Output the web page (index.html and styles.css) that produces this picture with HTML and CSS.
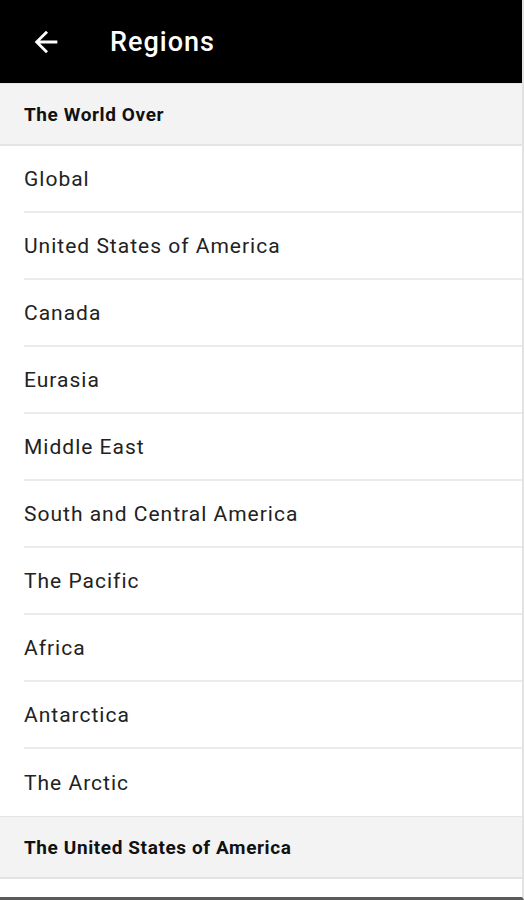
FILE: index.html
```
<!DOCTYPE html>
<html lang="en">
<head>
    <meta charset="UTF-8">
    <meta name="viewport" content="width=device-width, initial-scale=1.0">
    <title>Regions</title>
    <link rel="stylesheet" href="styles.css">
</head>
<body>

    <div class="screen">
        <header class="toolbar">
            <span class="back">
                <svg width="34" height="34" viewBox="0 0 24 24"><path d="M20 11H7.83l5.59-5.59L12 4l-8 8 8 8 1.41-1.41L7.83 13H20v-2z" fill="#fff"/></svg>
            </span>
            <h1>Regions</h1>
        </header>

        <div class="section">The World Over</div>
        <ul class="list">
            <li>Global</li>
            <li>United States of America</li>
            <li>Canada</li>
            <li>Eurasia</li>
            <li>Middle East</li>
            <li>South and Central America</li>
            <li>The Pacific</li>
            <li>Africa</li>
            <li>Antarctica</li>
            <li class="last">The Arctic</li>
        </ul>
        <div class="section">The United States of America</div>
    </div>

</body>
</html>
```

FILE: styles.css
```
* {
    box-sizing: border-box;
    margin: 0;
    padding: 0;
}

body {
    font-family: Roboto, 'Noto Sans', sans-serif;
    background: #fff;
}

.screen {
    height: 900px;
    overflow: hidden;
    border-right: 2px solid #e2e2e2;
    border-bottom: 3px solid #5a5a5a;
}

.toolbar {
    height: 83px;
    background: #000;
    display: flex;
    align-items: center;
    padding-left: 29px;
}

.back {
    display: flex;
    width: 34px;
    height: 34px;
    margin-right: 47px;
}

.toolbar h1 {
    color: #fff;
    font-size: 27px;
    font-weight: 500;
    letter-spacing: 1px;
}

.section {
    height: 63px;
    background: #f3f3f3;
    border-top: 1px solid #e6e6e6;
    border-bottom: 2px solid #e4e4e4;
    display: flex;
    align-items: center;
    padding-left: 24px;
    font-size: 19px;
    font-weight: bold;
    letter-spacing: 0.6px;
    color: #111;
}

.list {
    list-style: none;
}

.list li {
    height: 67px;
    display: flex;
    align-items: center;
    margin-left: 24px;
    border-bottom: 2px solid #ebebeb;
    font-size: 21px;
    color: #222;
    letter-spacing: 1px;
}

.list li.last {
    border-bottom: none;
}
```
